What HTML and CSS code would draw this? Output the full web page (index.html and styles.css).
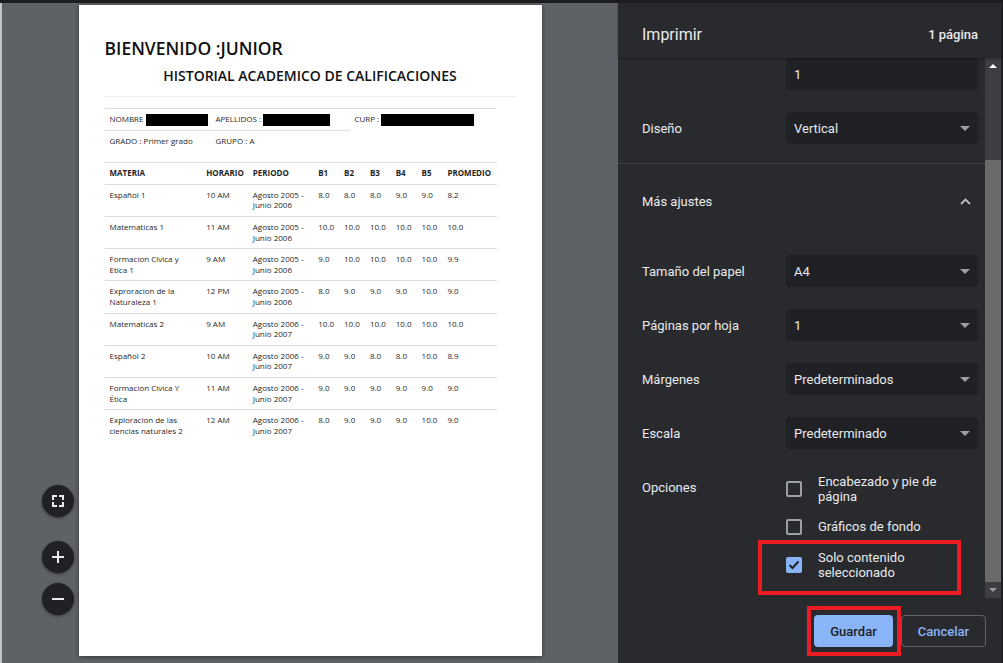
FILE: index.html
```html
<!DOCTYPE html>
<html lang="es">
<head>
<meta charset="utf-8">
<title>Imprimir</title>
<link rel="stylesheet" href="styles.css">
</head>
<body>
<div class="topbar"></div>
<div class="app">
  <div class="edge-left"></div>
  <main class="preview">
    <div class="paper">
      <h1 class="welcome">BIENVENIDO :JUNIOR</h1>
      <h2 class="title">HISTORIAL ACADEMICO DE CALIFICACIONES</h2>
      <hr class="rule">
      <table class="info">
        <colgroup><col class="ic1"><col class="ic2"><col class="ic3"></colgroup>
        <tr>
          <td>NOMBRE <span class="redact r-nombre"></span></td>
          <td>APELLIDOS :<span class="redact r-apellidos"></span></td>
          <td>CURP : <span class="redact r-curp"></span></td>
        </tr>
        <tr>
          <td>GRADO : Primer grado</td>
          <td>GRUPO : A</td>
        </tr>
      </table>
      <table class="grades">
        <colgroup>
          <col class="c-mat"><col class="c-hor"><col class="c-per">
          <col class="c-b"><col class="c-b"><col class="c-b"><col class="c-b"><col class="c-b">
          <col class="c-pro">
        </colgroup>
        <tr><th>MATERIA</th><th>HORARIO</th><th>PERIODO</th><th>B1</th><th>B2</th><th>B3</th><th>B4</th><th>B5</th><th>PROMEDIO</th></tr>
        <tr><td>Español 1</td><td>10 AM</td><td>Agosto 2005 -<br>Junio 2006</td><td>8.0</td><td>8.0</td><td>8.0</td><td>9.0</td><td>9.0</td><td>8.2</td></tr>
        <tr><td>Matematicas 1</td><td>11 AM</td><td>Agosto 2005 -<br>Junio 2006</td><td>10.0</td><td>10.0</td><td>10.0</td><td>10.0</td><td>10.0</td><td>10.0</td></tr>
        <tr><td>Formacion Civica y<br>Etica 1</td><td>9 AM</td><td>Agosto 2005 -<br>Junio 2006</td><td>9.0</td><td>10.0</td><td>10.0</td><td>10.0</td><td>10.0</td><td>9.9</td></tr>
        <tr><td>Exproracion de la<br>Naturaleza 1</td><td>12 PM</td><td>Agosto 2005 -<br>Junio 2006</td><td>8.0</td><td>9.0</td><td>9.0</td><td>9.0</td><td>10.0</td><td>9.0</td></tr>
        <tr><td>Matematicas 2</td><td>9 AM</td><td>Agosto 2006 -<br>Junio 2007</td><td>10.0</td><td>10.0</td><td>10.0</td><td>10.0</td><td>10.0</td><td>10.0</td></tr>
        <tr><td>Español 2</td><td>10 AM</td><td>Agosto 2006 -<br>Junio 2007</td><td>9.0</td><td>9.0</td><td>8.0</td><td>8.0</td><td>10.0</td><td>8.9</td></tr>
        <tr><td>Formacion Civica Y<br>Ética</td><td>11 AM</td><td>Agosto 2006 -<br>Junio 2007</td><td>9.0</td><td>9.0</td><td>9.0</td><td>9.0</td><td>9.0</td><td>9.0</td></tr>
        <tr><td>Exploracion de las<br>ciencias naturales 2</td><td>12 AM</td><td>Agosto 2006 -<br>Junio 2007</td><td>8.0</td><td>9.0</td><td>9.0</td><td>9.0</td><td>10.0</td><td>9.0</td></tr>
      </table>
    </div>
    <div class="zoom">
      <button class="zbtn fit" aria-label="Ajustar a la página">
        <svg width="12" height="12" viewBox="0 0 12 12"><path d="M1 5V1h4M7 1h4v4M11 7v4H7M5 11H1V7" fill="none" stroke="#e8eaed" stroke-width="2"/></svg>
      </button>
      <button class="zbtn" aria-label="Acercar">
        <svg width="12" height="12" viewBox="0 0 12 12"><path d="M6 0v12M0 6h12" fill="none" stroke="#e8eaed" stroke-width="2"/></svg>
      </button>
      <button class="zbtn" aria-label="Alejar">
        <svg width="12" height="12" viewBox="0 0 12 12"><path d="M0 6h12" fill="none" stroke="#e8eaed" stroke-width="2"/></svg>
      </button>
    </div>
  </main>
  <aside class="panel">
    <header class="panel-head">
      <span class="panel-title">Imprimir</span>
      <span class="panel-count">1 página</span>
    </header>
    <div class="panel-scroll">
      <div class="settings">
        <div class="row"><span class="label"></span><div class="field">1</div></div>
        <div class="row gap"><span class="label">Diseño</span><div class="field select">Vertical<svg class="caret" width="10" height="5" viewBox="0 0 10 5"><path d="M0 0h10L5 5z" fill="#9aa0a6"/></svg></div></div>
        <div class="divider"></div>
        <div class="more"><span>Más ajustes</span><svg width="11" height="7" viewBox="0 0 11 7"><path d="M1 6l4.5-4.5L10 6" fill="none" stroke="#bdc1c6" stroke-width="1.8"/></svg></div>
        <div class="row"><span class="label">Tamaño del papel</span><div class="field select">A4<svg class="caret" width="10" height="5" viewBox="0 0 10 5"><path d="M0 0h10L5 5z" fill="#9aa0a6"/></svg></div></div>
        <div class="row gap"><span class="label">Páginas por hoja</span><div class="field select">1<svg class="caret" width="10" height="5" viewBox="0 0 10 5"><path d="M0 0h10L5 5z" fill="#9aa0a6"/></svg></div></div>
        <div class="row gap"><span class="label">Márgenes</span><div class="field select">Predeterminados<svg class="caret" width="10" height="5" viewBox="0 0 10 5"><path d="M0 0h10L5 5z" fill="#9aa0a6"/></svg></div></div>
        <div class="row gap"><span class="label">Escala</span><div class="field select">Predeterminado<svg class="caret" width="10" height="5" viewBox="0 0 10 5"><path d="M0 0h10L5 5z" fill="#9aa0a6"/></svg></div></div>
        <div class="options">
          <span class="label opt-label">Opciones</span>
          <div class="checks">
            <div class="check"><span class="box"></span><span class="check-text">Encabezado y pie de<br>página</span></div>
            <div class="check"><span class="box"></span><span class="check-text">Gráficos de fondo</span></div>
            <div class="check">
              <span class="box on"><svg width="12" height="10" viewBox="0 0 12 10"><path d="M1.5 5l3 3 6-6.5" fill="none" stroke="#202124" stroke-width="2"/></svg></span>
              <span class="check-text">Solo contenido<br>seleccionado</span>
              <span class="annot annot-check"></span>
            </div>
          </div>
        </div>
      </div>
      <div class="scrollbar">
        <span class="sb-btn"><svg width="8" height="4" viewBox="0 0 8 4"><path d="M0 4L4 0l4 4z" fill="#ffffff"/></svg></span>
        <div class="sb-thumb"></div>
        <span class="sb-btn"><svg width="8" height="4" viewBox="0 0 8 4"><path d="M0 0h8L4 4z" fill="#9a9a9a"/></svg></span>
      </div>
    </div>
    <footer class="panel-foot">
      <button class="btn primary">Guardar<span class="annot annot-save"></span></button>
      <button class="btn secondary">Cancelar</button>
    </footer>
  </aside>
  <div class="edge-right"></div>
</div>
</body>
</html>
```

FILE: styles.css
```css
* { box-sizing: border-box; }
html, body { margin: 0; height: 100%; }
body {
  background: #1f2023;
  overflow: hidden;
  font-family: Roboto, "Noto Sans", Arial, sans-serif;
}
button { font-family: inherit; border: 0; padding: 0; margin: 0; cursor: pointer; }

.topbar { height: 3px; background: #1c1d20; }
.app { display: flex; height: 660px; }
.edge-left { width: 2px; background: #c3c5c8; }
.edge-right { width: 2px; background: #1f2023; }

/* ---------- preview ---------- */
.preview {
  flex: 1;
  background: #5e6165;
  position: relative;
  display: flex;
  justify-content: center;
  padding-top: 2px;
}
.paper {
  width: 463px;
  height: 651px;
  background: #fff;
  box-shadow: 0 1px 4px rgba(0, 0, 0, .45);
  padding: 32px 26px 0;
  font-family: "Open Sans", "Liberation Sans", sans-serif;
  color: #1f1f1f;
}
.welcome {
  margin: 0;
  font-size: 17.5px;
  line-height: 23px;
  font-weight: 600;
  color: #111;
}
.title {
  margin: 6px 0 0;
  font-size: 14px;
  line-height: 20px;
  font-weight: 600;
  text-align: center;
  color: #111;
}
.rule {
  margin: 10px 0 11px;
  border: 0;
  border-top: 1px solid #eeeeee;
  height: 0;
}
.info, .grades {
  border-collapse: collapse;
  table-layout: fixed;
  font-size: 8px;
  line-height: 10.6px;
}
.info { width: 391px; margin-bottom: 11px; }
.grades { width: 392px; }
.ic1 { width: 106px; }
.ic2 { width: 139px; }
.ic3 { width: 146px; }
.c-mat { width: 96.7px; }
.c-hor { width: 46.6px; }
.c-per { width: 65.4px; }
.c-b { width: 25.85px; }
.c-pro { width: 54px; }
.info td, .grades td, .grades th {
  padding: 5px;
  border-top: 1px solid #dddddd;
  text-align: left;
  vertical-align: top;
  white-space: nowrap;
}
.grades th { font-weight: 700; }
.redact {
  display: inline-block;
  height: 12px;
  margin: -2px 0 -2px 2px;
  background: #000;
  vertical-align: middle;
}
.r-nombre { width: 62px; margin-left: 0; }
.r-apellidos { width: 67px; }
.r-curp { width: 93px; margin-left: 0; }

.zoom {
  position: absolute;
  left: 40px;
  bottom: 48px;
  display: flex;
  flex-direction: column;
  gap: 10px;
}
.zbtn {
  width: 32px;
  height: 32px;
  border-radius: 50%;
  background: #202124;
  display: flex;
  align-items: center;
  justify-content: center;
  box-shadow: 0 1px 3px rgba(0, 0, 0, .45);
}
.zbtn.fit { margin-bottom: 14px; }

/* ---------- panel ---------- */
.panel {
  width: 383px;
  background: #292a2d;
  display: flex;
  flex-direction: column;
  color: #e8eaed;
  font-size: 13px;
}
.panel-head {
  height: 55px;
  padding: 7px 23px 0 24px;
  display: flex;
  align-items: center;
  justify-content: space-between;
  position: relative;
  z-index: 1;
  background: #292a2d;
  box-shadow: 0 1px 2px rgba(0, 0, 0, .35);
}
.panel-title { font-size: 16px; }
.panel-count { font-size: 13px; font-weight: 500; }

.panel-scroll { height: 540px; display: flex; overflow: hidden; }
.settings { flex: 1; }
.row {
  display: flex;
  align-items: center;
  height: 32px;
  padding: 0 7px 0 24px;
  margin-top: 19px;
}
.row:first-child { margin-top: 0; }
.row.gap { margin-top: 22px; }
.label { width: 144px; flex: none; line-height: 15px; }
.field {
  width: 192px;
  height: 32px;
  background: #202124;
  border-radius: 4px;
  display: flex;
  align-items: center;
  padding: 0 8px;
}
.caret { margin-left: auto; }
.divider { height: 1px; background: #3c4043; margin-top: 19px; }
.more {
  height: 72px;
  display: flex;
  align-items: center;
  justify-content: space-between;
  padding: 2px 14px 0 24px;
}

.options {
  display: flex;
  margin-top: 17px;
  padding: 0 7px 0 24px;
}
.opt-label { padding-top: 14px; }
.checks { display: flex; flex-direction: column; }
.check {
  display: flex;
  align-items: center;
  gap: 16px;
  padding: 7.5px 0;
  line-height: 15px;
  position: relative;
}
.box {
  width: 16px;
  height: 16px;
  border: 2px solid #9aa0a6;
  border-radius: 2px;
  flex: none;
  display: flex;
  align-items: center;
  justify-content: center;
}
.box.on { background: #8ab4f8; border-color: #8ab4f8; }

.annot {
  position: absolute;
  border: 4px solid #ec1c24;
  pointer-events: none;
}
.annot-check { left: -28px; width: 203px; top: -2px; bottom: -8px; }

.scrollbar {
  width: 16px;
  background: #3d3e41;
  display: flex;
  flex-direction: column;
}
.sb-btn { height: 16px; display: flex; align-items: center; justify-content: center; }
.sb-thumb { margin-top: 86px; height: 422px; background: #6a6a6a; }

.panel-foot {
  flex: 1;
  display: flex;
  justify-content: flex-end;
  align-items: flex-start;
  gap: 8px;
  padding: 17px 15px 0 0;
}
.btn {
  height: 32px;
  border-radius: 4px;
  font-size: 13px;
  font-weight: 500;
  position: relative;
}
.btn.primary { width: 79px; background: #8ab4f8; color: #202124; }
.btn.secondary { width: 85px; background: transparent; color: #8ab4f8; border: 1px solid #5f6368; }
.annot-save { left: -7px; right: -8px; top: -9px; bottom: -9px; }
```
